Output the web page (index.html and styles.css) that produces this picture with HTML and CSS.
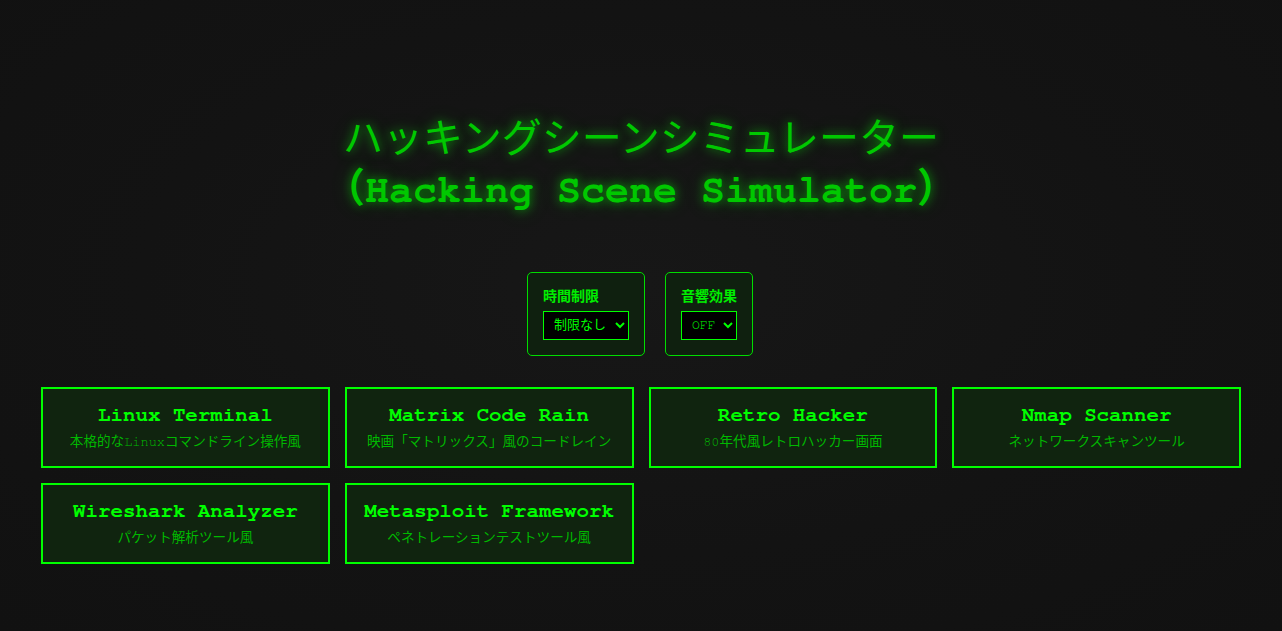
FILE: index.html
```html
<!DOCTYPE html>
<html lang="ja">
<head>
<meta charset="utf-8">
<title>ハッキングシーンシミュレーター</title>
<link rel="stylesheet" href="styles.css">
</head>
<body>
<div class="container">
  <h1 class="title"><span class="title-jp">ハッキングシーンシミュレーター</span><span class="title-en">（Hacking Scene Simulator）</span></h1>
  <div class="controls">
    <div class="control">
      <label class="control-label">時間制限</label>
      <select class="control-select">
        <option>制限なし</option>
      </select>
    </div>
    <div class="control">
      <label class="control-label">音響効果</label>
      <select class="control-select">
        <option>OFF</option>
      </select>
    </div>
  </div>
  <div class="cards">
    <div class="card">
      <div class="card-title">Linux Terminal</div>
      <div class="card-desc">本格的なLinuxコマンドライン操作風</div>
    </div>
    <div class="card">
      <div class="card-title">Matrix Code Rain</div>
      <div class="card-desc">映画「マトリックス」風のコードレイン</div>
    </div>
    <div class="card">
      <div class="card-title">Retro Hacker</div>
      <div class="card-desc">80年代風レトロハッカー画面</div>
    </div>
    <div class="card">
      <div class="card-title">Nmap Scanner</div>
      <div class="card-desc">ネットワークスキャンツール</div>
    </div>
    <div class="card">
      <div class="card-title">Wireshark Analyzer</div>
      <div class="card-desc">パケット解析ツール風</div>
    </div>
    <div class="card">
      <div class="card-title">Metasploit Framework</div>
      <div class="card-desc">ペネトレーションテストツール風</div>
    </div>
  </div>
</div>
</body>
</html>
```

FILE: styles.css
```css
html, body {
  margin: 0;
  padding: 0;
  height: 100%;
}

body {
  background: radial-gradient(ellipse at 50% 45%, #171717 0%, #131313 55%, #111111 100%);
  color: #00ff00;
  font-family: "Nimbus Mono PS", "Nimbus Mono L", "FreeMono", "Courier 10 Pitch", "Courier New", "Liberation Mono", "Noto Sans CJK JP", monospace;
}

.container {
  max-width: 1200px;
  margin: 0 auto;
  padding: 113px 0 20px;
}

.title {
  margin: 0;
  font-size: 40px;
  font-weight: bold;
  text-align: center;
  color: #00c800;
  text-shadow: 0 0 10px rgba(0, 255, 0, 0.5), 0 0 20px rgba(0, 255, 0, 0.25);
}

.title-jp {
  display: block;
  height: 52px;
  line-height: 54px;
  font-weight: normal;
}

.title-en {
  display: block;
  height: 50px;
  line-height: 50px;
}

.controls {
  display: flex;
  justify-content: center;
  gap: 20px;
  margin: 57px 0 31px;
  padding-right: 2px;
}

.control {
  display: flex;
  flex-direction: column;
  align-items: flex-start;
  gap: 5px;
  padding: 15px;
  border: 1px solid #00dd00;
  border-radius: 5px;
  background: #0f200f;
}

.control-label {
  font-size: 14px;
  font-weight: bold;
  line-height: 18px;
  color: #00ee00;
}

.control-select {
  width: 86px;
  height: 29px;
  padding: 0 4px 0 6px;
  border: 1px solid #00ff00;
  border-radius: 0;
  background: #000;
  color: #00ff00;
  font-family: inherit;
  font-size: 13px;
}

.control:last-child .control-select {
  width: 56px;
}

.cards {
  display: grid;
  grid-template-columns: repeat(4, 1fr);
  gap: 15px;
}

.card {
  display: flex;
  flex-direction: column;
  align-items: center;
  padding: 14px 10px 15px;
  border: 2px solid #00ff00;
  background: #10240f;
  min-height: 47px;
}

.card-title {
  font-size: 20.8px;
  line-height: 24px;
  font-weight: bold;
  color: #00ff00;
}

.card-desc {
  margin-top: 6px;
  font-size: 13.6px;
  line-height: 18px;
  color: #00b800;
}
```
